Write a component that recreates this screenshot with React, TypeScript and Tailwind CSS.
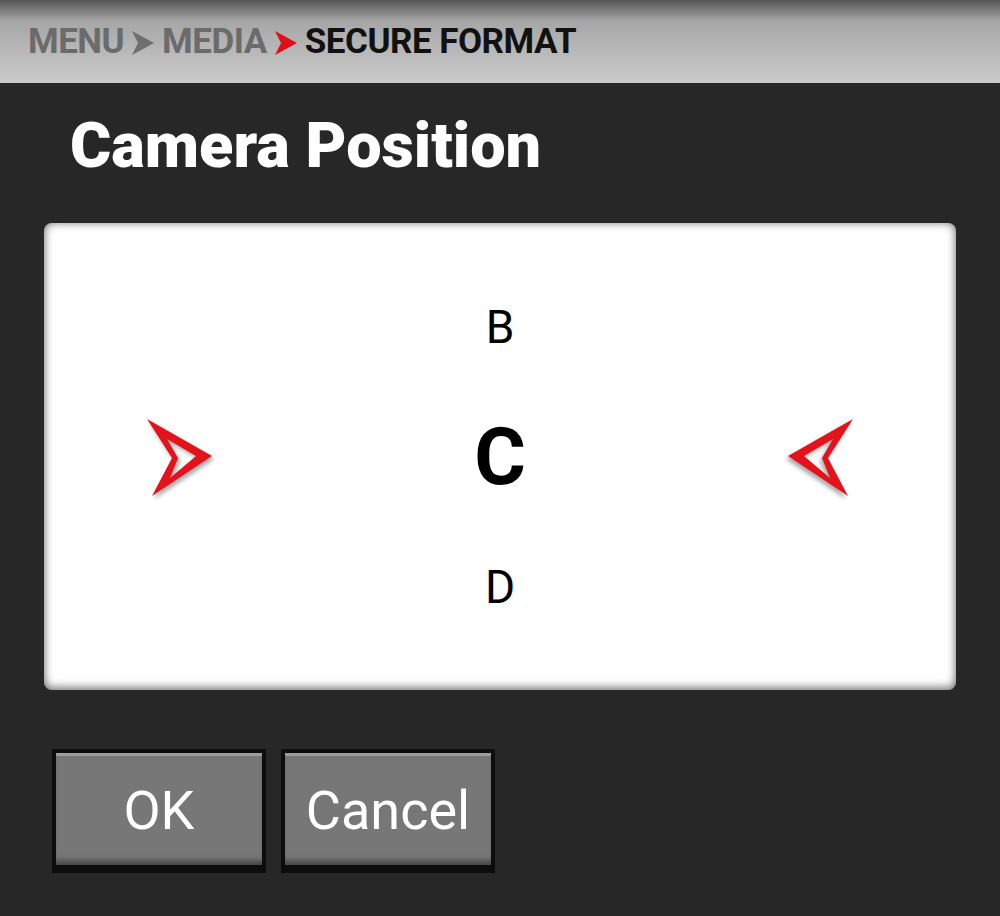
import React from "react";

function Crumb({ color }: { color: string }) {
  return (
    <svg width="22" height="24" viewBox="0 0 22 24" className="shrink-0">
      <polygon points="0,0 22,12 0,24 6,12" fill={color} />
    </svg>
  );
}

function Pointer({ flip }: { flip?: boolean }) {
  return (
    <svg
      width="72"
      height="84"
      viewBox="0 0 72 84"
      className={`drop-shadow-[2px_3px_2px_rgba(0,0,0,0.35)] ${flip ? "-scale-x-100" : ""}`}
    >
      <path
        fillRule="evenodd"
        d="M3 4 L68 41 L8 81 L28 43 Z M23 24 L52 41 L26 63 L34 43 Z"
        fill="#e3121b"
      />
    </svg>
  );
}

function Btn({ label }: { label: string }) {
  return (
    <div className="w-[214px] h-[124px] bg-[#0d0d0d] p-[4px] pb-[8px]">
      <div className="h-full bg-[#777777] border-t-[3px] border-[#9c9c9c] shadow-[inset_0_-8px_6px_-4px_rgba(0,0,0,0.45)] flex items-center justify-center">
        <span className="text-white text-[54px] leading-none font-['Roboto']">{label}</span>
      </div>
    </div>
  );
}

export default function App() {
  return (
    <div className="w-[1000px] h-[916px] bg-[#272727] font-['Roboto',sans-serif] overflow-hidden">
      {/* breadcrumb */}
      <div className="h-[83px] bg-gradient-to-b from-[#555555] via-[#a6a6a6] via-25% to-[#cbcbcb] flex items-center gap-[8px] pl-[28px] pt-[2px]">
        <span className="text-[35px] font-bold text-[#6b6b6b] tracking-[-0.5px]">MENU</span>
        <Crumb color="#6f6f6f" />
        <span className="text-[35px] font-bold text-[#6b6b6b] tracking-[-0.5px]">MEDIA</span>
        <Crumb color="#e0101a" />
        <span className="text-[35px] font-bold text-[#111111] tracking-[-0.5px]">SECURE FORMAT</span>
      </div>

      <h1 className="text-white font-black text-[63px] leading-none pl-[70px] pt-[31px]">Camera Position</h1>

      {/* selector */}
      <div className="mx-[44px] mt-[46px] h-[467px] bg-white rounded-[8px] shadow-[inset_0_0_10px_rgba(0,0,0,0.45),inset_0_-4px_8px_rgba(0,0,0,0.25)] flex items-center justify-between px-[100px]">
        <Pointer />
        <div className="flex flex-col items-center text-black">
          <span className="text-[46px] leading-[130px]">B</span>
          <span className="text-[79px] font-bold leading-[130px]">C</span>
          <span className="text-[46px] leading-[130px]">D</span>
        </div>
        <Pointer flip />
      </div>

      {/* actions */}
      <div className="flex gap-[15px] pl-[52px] mt-[59px]">
        <Btn label="OK" />
        <Btn label="Cancel" />
      </div>
    </div>
  );
}
